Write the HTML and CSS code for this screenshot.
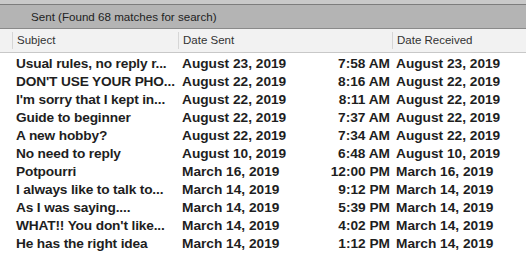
FILE: index.html
```html
<!DOCTYPE html>
<html lang="en">
<head>
  <meta charset="UTF-8">
  <title>Sent</title>
  <link rel="stylesheet" href="styles.css">
</head>
<body>

<div class="topstrip"></div>
<div class="titlebar">
  <span class="title">Sent (Found 68 matches for search)</span>
</div>

<div class="list">
  <div class="row head">
    <div class="gutter"></div>
    <div class="cell subject">Subject</div>
    <div class="cell sent">Date Sent</div>
    <div class="cell received">Date Received</div>
  </div>

  <div class="row"><div class="gutter"></div><div class="cell subject">Usual rules, no reply r...</div><div class="cell sent"><span>August 23, 2019</span><span>7:58 AM</span></div><div class="cell received">August 23, 2019</div></div>
  <div class="row"><div class="gutter"></div><div class="cell subject">DON'T USE YOUR PHO...</div><div class="cell sent"><span>August 22, 2019</span><span>8:16 AM</span></div><div class="cell received">August 22, 2019</div></div>
  <div class="row"><div class="gutter"></div><div class="cell subject">I'm sorry that I kept in...</div><div class="cell sent"><span>August 22, 2019</span><span>8:11 AM</span></div><div class="cell received">August 22, 2019</div></div>
  <div class="row"><div class="gutter"></div><div class="cell subject">Guide to beginner</div><div class="cell sent"><span>August 22, 2019</span><span>7:37 AM</span></div><div class="cell received">August 22, 2019</div></div>
  <div class="row"><div class="gutter"></div><div class="cell subject">A new hobby?</div><div class="cell sent"><span>August 22, 2019</span><span>7:34 AM</span></div><div class="cell received">August 22, 2019</div></div>
  <div class="row"><div class="gutter"></div><div class="cell subject">No need to reply</div><div class="cell sent"><span>August 10, 2019</span><span>6:48 AM</span></div><div class="cell received">August 10, 2019</div></div>
  <div class="row"><div class="gutter"></div><div class="cell subject">Potpourri</div><div class="cell sent"><span>March 16, 2019</span><span>12:00 PM</span></div><div class="cell received">March 16, 2019</div></div>
  <div class="row"><div class="gutter"></div><div class="cell subject">I always like to talk to...</div><div class="cell sent"><span>March 14, 2019</span><span>9:12 PM</span></div><div class="cell received">March 14, 2019</div></div>
  <div class="row"><div class="gutter"></div><div class="cell subject">As I was saying....</div><div class="cell sent"><span>March 14, 2019</span><span>5:39 PM</span></div><div class="cell received">March 14, 2019</div></div>
  <div class="row"><div class="gutter"></div><div class="cell subject">WHAT!! You don't like...</div><div class="cell sent"><span>March 14, 2019</span><span>4:02 PM</span></div><div class="cell received">March 14, 2019</div></div>
  <div class="row"><div class="gutter"></div><div class="cell subject">He has the right idea</div><div class="cell sent"><span>March 14, 2019</span><span>1:12 PM</span></div><div class="cell received">March 14, 2019</div></div>
</div>

</body>
</html>
```

FILE: styles.css
```css
body {
  margin: 0;
  font-family: "Liberation Sans", Arial, sans-serif;
  background: #ffffff;
  color: #1e1e1e;
  overflow: hidden;
}
.topstrip {
  height: 4px;
  background-color: #c9c9c9;
  border-bottom: 1px solid #7d7d7d;
}
.titlebar {
  height: 23px;
  background-color: #b4b4b4;
  border-bottom: 1px solid #8a8a8a;
  display: flex;
  align-items: center;
  padding-left: 31px;
}
.title {
  font-size: 11.6px;
  color: #222;
}
.row {
  display: grid;
  grid-template-columns: 12px 166px 214px 1fr;
  height: 18px;
  align-items: center;
  font-size: 13.7px;
  font-weight: bold;
}
.row.head {
  height: 23px;
  background-color: #f2f2f2;
  border-bottom: 1px solid #c8c8c8;
  font-size: 11.5px;
  font-weight: normal;
  color: #333;
  margin-bottom: 1px;
}
.head .cell {
  border-left: 1px solid #d6d6d6;
  height: 17px;
  line-height: 17px;
}
.cell {
  padding-left: 4px;
  white-space: nowrap;
  overflow: hidden;
}
.subject {
  letter-spacing: -0.15px;
}
.head .subject {
  letter-spacing: 0;
}
.sent {
  display: flex;
  justify-content: space-between;
  padding-right: 2px;
}
.head .sent {
  display: block;
}
```
